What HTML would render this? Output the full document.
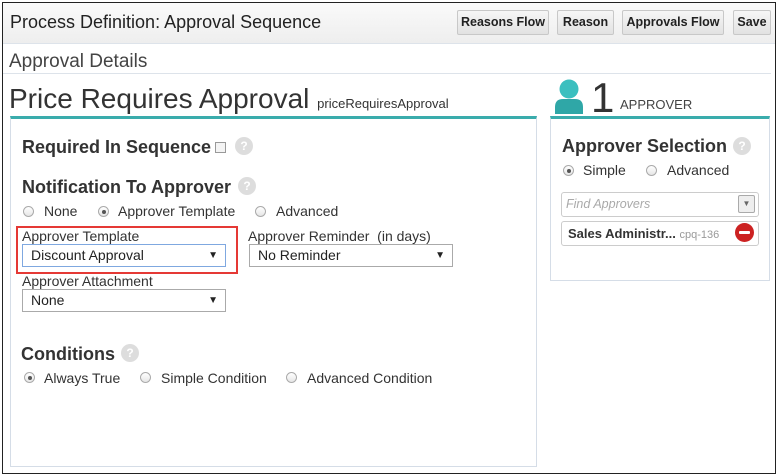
<!DOCTYPE html>
<html><head><style>
*{margin:0;padding:0;box-sizing:border-box}
body{width:778px;height:476px;background:#fff;font-family:"Liberation Sans",Arial,sans-serif;color:#333;position:relative;overflow:hidden}
.a{position:absolute;white-space:nowrap}
.frame{position:absolute;left:2px;top:2px;width:774px;height:472px;border:1.5px solid #222}
.hdr{position:absolute;left:3px;top:3px;width:772px;height:41px;background:linear-gradient(#fafafa,#eeeeee);border-bottom:1px solid #dde3ea}
.btn{position:absolute;top:10px;height:25px;border:1px solid #c8c8c8;border-radius:2px;background:linear-gradient(#f6f6f6,#e2e2e2);font-weight:bold;font-size:12.5px;line-height:23px;text-align:center;color:#222}
.bold{font-weight:bold;font-size:18px;color:#333}
.help{position:absolute;width:18px;height:18px;border-radius:50%;background:#ddd;color:#fff;font-size:12px;font-weight:bold;text-align:center;line-height:18px}
.radio{position:absolute;width:11px;height:11px;border-radius:50%;border:1px solid #aaa;background:linear-gradient(#fff,#e6e6e6)}
.radio.on::after{content:"";position:absolute;left:2.5px;top:2.5px;width:4px;height:4px;border-radius:50%;background:#555}
.t{font-size:14px;color:#333}
.sel{position:absolute;height:23px;border:1px solid #aaa;background:#fff;font-size:14px;line-height:21px;padding-left:8px;color:#222}
.sel::after{content:"▼";position:absolute;right:7px;top:0;font-size:10px}
</style></head><body>
<div class="hdr"></div>
<div class="a" style="left:10px;top:12px;font-size:18px;color:#222">Process Definition: Approval Sequence</div>
<div class="btn" style="left:457px;width:92px">Reasons Flow</div>
<div class="btn" style="left:557px;width:57px">Reason</div>
<div class="btn" style="left:622px;width:102px">Approvals Flow</div>
<div class="btn" style="left:733px;width:38px">Save</div>
<div class="a" style="left:9px;top:51px;font-size:19px;color:#444">Approval Details</div>
<div class="a" style="left:3px;top:73px;width:768px;height:1px;background:#dde3ea"></div>
<div class="a" style="left:9px;top:83px;font-size:28px;color:#333">Price Requires Approval <span style="font-size:13px">priceRequiresApproval</span></div>
<svg class="a" style="left:554px;top:79px" width="30" height="35" viewBox="0 0 30 35"><circle cx="15" cy="10" r="9.5" fill="#3bbfbf"/><path d="M1 35 V28 Q1 20 9 20 H21 Q29 20 29 28 V35Z" fill="#2fa7a7"/></svg>
<div class="a" style="left:591px;top:74px;font-size:42px;color:#333">1</div>
<div class="a" style="left:620px;top:97px;font-size:13px;color:#444">APPROVER</div>
<div class="a" style="left:10px;top:116px;width:527px;height:351px;border:1px solid #d5dde7;border-top:3px solid #3aacac"></div>
<div class="a" style="left:550px;top:116px;width:220px;height:165px;border:1px solid #d5dde7;border-top:3px solid #3aacac"></div>
<div class="a bold" style="left:22px;top:137px">Required In Sequence</div>
<div class="a" style="left:215px;top:142px;width:11px;height:11px;border:1px solid #999;background:#f4f4f4"></div>
<div class="help" style="left:235px;top:137px">?</div>
<div class="a bold" style="left:22px;top:177px">Notification To Approver</div>
<div class="help" style="left:238px;top:177px">?</div>
<div class="radio" style="left:23px;top:206px"></div><div class="a t" style="left:44px;top:203px">None</div>
<div class="radio on" style="left:98px;top:206px"></div><div class="a t" style="left:118px;top:203px">Approver Template</div>
<div class="radio" style="left:255px;top:206px"></div><div class="a t" style="left:276px;top:203px">Advanced</div>
<div class="a" style="left:16px;top:226px;width:222px;height:48px;border:2px solid #e53935"></div>
<div class="a t" style="left:22px;top:228px">Approver Template</div>
<div class="sel" style="left:22px;top:244px;width:204px;border-color:#7fa8e0">Discount Approval</div>
<div class="a t" style="left:248px;top:228px">Approver Reminder &nbsp;(in days)</div>
<div class="sel" style="left:249px;top:244px;width:204px">No Reminder</div>
<div class="a t" style="left:22px;top:273px">Approver Attachment</div>
<div class="sel" style="left:22px;top:289px;width:204px">None</div>
<div class="a bold" style="left:21px;top:344px">Conditions</div>
<div class="help" style="left:121px;top:344px">?</div>
<div class="radio on" style="left:24px;top:372px"></div><div class="a t" style="left:44px;top:370px">Always True</div>
<div class="radio" style="left:140px;top:372px"></div><div class="a t" style="left:161px;top:370px">Simple Condition</div>
<div class="radio" style="left:286px;top:372px"></div><div class="a t" style="left:307px;top:370px">Advanced Condition</div>
<div class="a bold" style="left:562px;top:136px">Approver Selection</div>
<div class="help" style="left:733px;top:137px">?</div>
<div class="radio on" style="left:563px;top:165px"></div><div class="a t" style="left:583px;top:162px">Simple</div>
<div class="radio" style="left:646px;top:165px"></div><div class="a t" style="left:667px;top:162px">Advanced</div>
<div class="a" style="left:561px;top:192px;width:198px;height:25px;border:1px solid #ccc;border-radius:3px;background:#fff"></div>
<div class="a" style="left:566px;top:197px;font-size:12.5px;font-style:italic;color:#aaa">Find Approvers</div>
<div class="a" style="left:738px;top:195px;width:17px;height:18px;border:1px solid #aaa;border-radius:2px;background:#eee;font-size:8px;text-align:center;line-height:16px;color:#666">▼</div>
<div class="a" style="left:561px;top:221px;width:198px;height:25px;border:1px solid #ccc;border-radius:3px"></div>
<div class="a" style="left:568px;top:226px;font-size:13px;font-weight:bold;color:#333">Sales Administr... <span style="font-weight:normal;font-size:11px;color:#999">cpq-136</span></div>
<div class="a" style="left:735px;top:223px;width:19px;height:19px;border-radius:50%;background:#cc2222"><div style="position:absolute;left:4px;top:8px;width:11px;height:3px;background:#fff;border-radius:1px"></div></div>
<div class="frame"></div>
</body></html>
